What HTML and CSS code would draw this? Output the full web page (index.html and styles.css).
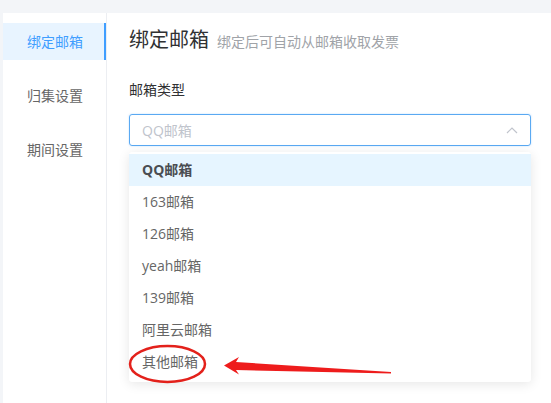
FILE: index.html
```html
<!DOCTYPE html>
<html lang="zh-CN">
<head>
  <meta charset="UTF-8">
  <title>绑定邮箱</title>
  <link rel="stylesheet" href="styles.css">
</head>
<body>
  <div class="panel">
    <ul class="side-nav">
      <li class="active">绑定邮箱</li>
      <li>归集设置</li>
      <li>期间设置</li>
    </ul>

    <div class="main">
      <div class="heading">
        <h2>绑定邮箱</h2>
        <span class="hint">绑定后可自动从邮箱收取发票</span>
      </div>

      <label class="field-label">邮箱类型</label>
      <div class="select-wrap">
        <div class="select">
          <span class="placeholder">QQ邮箱</span>
          <svg class="arrow" width="12" height="8" viewBox="0 0 12 8">
            <path d="M1 7 L6 2 L11 7" fill="none" stroke="#c0c4cc" stroke-width="1.2"/>
          </svg>
        </div>

        <ul class="dropdown">
          <li class="selected">QQ邮箱</li>
          <li>163邮箱</li>
          <li>126邮箱</li>
          <li>yeah邮箱</li>
          <li>139邮箱</li>
          <li>阿里云邮箱</li>
          <li>其他邮箱</li>
        </ul>
      </div>
    </div>
  </div>

  <!-- annotation drawn over the screenshot -->
  <svg class="mark" width="551" height="403" viewBox="0 0 551 403">
    <ellipse cx="167.5" cy="364" rx="37.5" ry="18" fill="none" stroke="#e3211b" stroke-width="2.5"/>
    <polygon points="224,365.5 239,357 236,362 391,372 391,373.5 236,370 239,374.5" fill="#ee1c1c"/>
  </svg>
</body>
</html>
```

FILE: styles.css
```css
body {
  margin: 0;
  padding: 13px 0 0 3px;
  background-color: #f3f5f8;
  font-family: 'Open Sans', 'Noto Sans CJK SC', sans-serif;
  color: #606266;
}

.panel {
  display: flex;
  background-color: #fff;
  height: 390px;
}

.side-nav {
  list-style: none;
  margin: 0;
  padding: 10px 0 0 0;
  width: 103px;
  border-right: 1px solid #eceef2;
  display: flex;
  flex-direction: column;
  gap: 17px;
}

.side-nav li {
  height: 37px;
  line-height: 37px;
  padding-left: 24px;
  font-size: 14px;
  color: #666;
}

.side-nav li.active {
  background-color: #e8f4ff;
  color: #409eff;
  border-right: 2px solid #409eff;
}

.main {
  flex: 1;
  padding: 15px 20px 0 22px;
}

.heading {
  display: flex;
  align-items: baseline;
  gap: 8px;
}

h2 {
  margin: 0;
  font-size: 20px;
  line-height: 24px;
  font-weight: normal;
  color: #303133;
}

.hint {
  font-size: 14px;
  color: #a0a3a8;
}

.field-label {
  display: block;
  margin-top: 28px;
  font-size: 14px;
  line-height: 20px;
  color: #303133;
}

.select-wrap {
  position: relative;
  margin-top: 14px;
}

.select {
  height: 30px;
  border: 1px solid #5aa9f2;
  border-radius: 3px;
  box-shadow: 0 0 2px rgba(64, 158, 255, 0.35);
  display: flex;
  align-items: center;
  justify-content: space-between;
  padding: 0 12px 0 12px;
}

.placeholder {
  font-size: 14px;
  color: #c0c4cc;
}

.dropdown {
  position: absolute;
  top: 38px;
  left: 0;
  right: 0;
  list-style: none;
  margin: 0;
  padding: 2px 0 4px 0;
  background-color: #fff;
  border-radius: 3px;
  box-shadow: 0 2px 12px rgba(0, 0, 0, 0.1);
}

.dropdown li {
  height: 32px;
  line-height: 32px;
  padding-left: 13px;
  font-size: 14px;
  color: #666;
}

.dropdown li.selected {
  background-color: #e6f5ff;
  color: #4a4d52;
  font-weight: bold;
}

.mark {
  position: absolute;
  top: 0;
  left: 0;
  pointer-events: none;
}
```
